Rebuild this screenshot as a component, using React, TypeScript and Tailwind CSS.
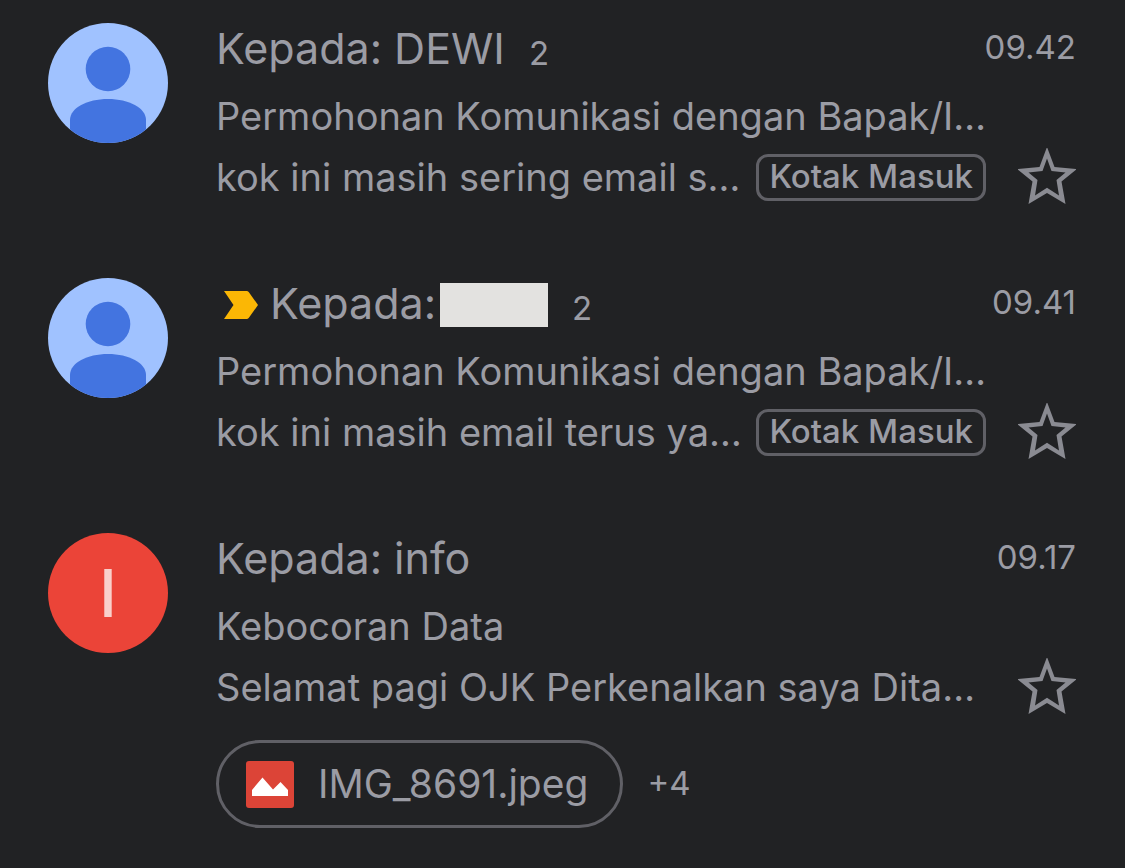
type Mail = {
  id: number
  to: string
  redacted?: boolean
  important?: boolean
  count?: number
  time: string
  subject: string
  snippet: string
  label?: string
  initial?: string
  attachment?: string
  more?: string
}

const mails: Mail[] = [
  {
    id: 1,
    to: 'Kepada: DEWI',
    count: 2,
    time: '09.42',
    subject: 'Permohonan Komunikasi dengan Bapak/I…',
    snippet: 'kok ini masih sering email s…',
    label: 'Kotak Masuk',
  },
  {
    id: 2,
    to: 'Kepada:',
    redacted: true,
    important: true,
    count: 2,
    time: '09.41',
    subject: 'Permohonan Komunikasi dengan Bapak/I…',
    snippet: 'kok ini masih email terus ya…',
    label: 'Kotak Masuk',
  },
  {
    id: 3,
    to: 'Kepada: info',
    time: '09.17',
    subject: 'Kebocoran Data',
    snippet: 'Selamat pagi OJK Perkenalkan saya Dita…',
    initial: 'I',
    attachment: 'IMG_8691.jpeg',
    more: '+4',
  },
]

function Avatar({ initial }: { initial?: string }) {
  if (initial) {
    return (
      <div className="mt-[11px] flex size-[120px] shrink-0 items-center justify-center rounded-full bg-[#eb4438] text-[66px] leading-none font-medium text-[#f9d0cb]">
        {initial}
      </div>
    )
  }
  return (
    <div className="mt-[11px] size-[120px] shrink-0 overflow-hidden rounded-full bg-[#a0c2ff]">
      <svg viewBox="0 0 120 120" className="size-full" aria-hidden="true">
        <circle cx="60" cy="46" r="22.3" fill="#4374e0" />
        <path d="M22 120V97c0-12 17-21 38-21s38 9 38 21v23z" fill="#4374e0" />
      </svg>
    </div>
  )
}

function ImportantMarker() {
  return (
    <svg viewBox="0 0 34 28" className="mt-1 mr-3 ml-2 h-7 w-[34px] shrink-0" aria-hidden="true">
      <path d="M0 0h22.500q1.500 0 2.400 1.200L34 14l-9.100 12.800q-.900 1.200-2.400 1.200H0l9.500-14z" fill="#fbb705" />
    </svg>
  )
}

function StarButton() {
  return (
    <button type="button" aria-label="Star" className="h-[58px] w-[58px] shrink-0">
      <svg viewBox="0 0 58 58" className="size-full" aria-hidden="true">
        <path
          fillRule="evenodd"
          fill="#8a8b92"
          d="M29 -1L36.500 19L59 21L43.500 33.500L47.500 56L29 45L10.500 56L14.500 33.500L-1 21L21.500 19zM29 10.500L24.500 23L10.500 24.500L19.500 32L17 47.500L29 39.800L41 47.500L38.500 32L47.500 24.500L33.500 23z"
        />
      </svg>
    </button>
  )
}

function Attachment({ name, more }: { name: string; more?: string }) {
  return (
    <div className="mt-6 flex items-center gap-6">
      <button
        type="button"
        className="flex h-[88px] items-center gap-6 rounded-full border-[3px] border-[#606066] pr-8 pl-[27px] text-[39px]"
      >
        <svg viewBox="0 0 48 48" className="size-12" aria-hidden="true">
          <rect y="1" width="48" height="47" rx="3" fill="#dc4437" />
          <path d="M6 36v-6l10.500-12.500L27 29.500l7.500-7.500L42 30v6z" fill="#fff" />
        </svg>
        {name}
      </button>
      <span className="text-[33px]">{more}</span>
    </div>
  )
}

function MailRow({ mail }: { mail: Mail }) {
  return (
    <li className="flex gap-12">
      <Avatar initial={mail.initial} />
      <div className="min-w-0 flex-1 whitespace-nowrap">
        <div className="flex h-[72px] items-center">
          {mail.important && <ImportantMarker />}
          <h2 className="text-[43px]">{mail.to}</h2>
          {mail.redacted && <span className="mt-1 ml-1 h-11 w-[108px] bg-[#e3e2e0]" />}
          {mail.count && <span className="mt-3 ml-6 text-[33px]">{mail.count}</span>}
          <time className="ml-auto text-[33px]">{mail.time}</time>
        </div>
        <p className="text-[38px] leading-[64px]">{mail.subject}</p>
        <div className="flex h-[58px] items-center">
          <p className="min-w-0 flex-1 text-[38px]">{mail.snippet}</p>
          {mail.label && (
            <span className="flex h-[47px] items-center rounded-xl border-[3px] border-[#606066] px-[10px] text-[33px] font-medium">
              {mail.label}
            </span>
          )}
          <div className="ml-8 flex">
            <StarButton />
          </div>
        </div>
        {mail.attachment && <Attachment name={mail.attachment} more={mail.more} />}
      </div>
    </li>
  )
}

export default function App() {
  return (
    <main className="min-h-screen bg-[#212224] pt-3 pr-[49px] pb-10 pl-12 font-['Inter',sans-serif] text-[#9b9ca4]">
      <ul className="flex flex-col gap-[61px]">
        {mails.map((mail) => (
          <MailRow key={mail.id} mail={mail} />
        ))}
      </ul>
    </main>
  )
}
